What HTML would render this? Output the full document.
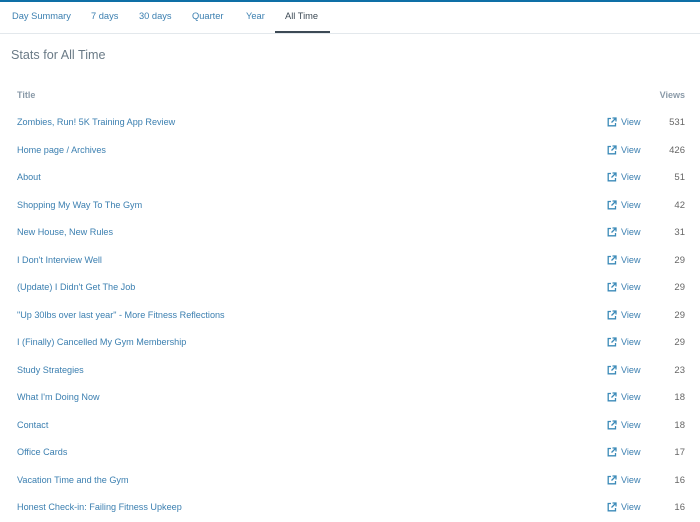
<!DOCTYPE html>
<html><head><style>
body{margin:0;width:700px;height:522px;background:#fff;font-family:"Liberation Sans",sans-serif;overflow:hidden;position:relative}
.top{position:absolute;left:0;top:0;width:700px;height:2px;background:#0e6fa6}
.tabs{position:absolute;top:0;left:0;width:700px;height:33px;border-bottom:1px solid #e3e8ec}
.tab{position:absolute;top:11px;font-size:9.3px;color:#3b7fb0}
.tab.act{color:#3d4a55}
.ul{position:absolute;left:275px;top:31px;width:55px;height:2px;background:#3d4a55}
h1{position:absolute;left:11px;top:48px;margin:0;font-size:12.6px;font-weight:normal;color:#6a7a86}
.hd{position:absolute;top:90px;font-size:9px;font-weight:bold;color:#8a9aa8}
.row{position:absolute;left:0;width:700px;height:14px;font-size:9.1px}
.row .t{position:absolute;left:17px;color:#3b7fb0}
.row .v{position:absolute;left:607px;color:#3b7fb0}
.row .v svg{vertical-align:-2px;margin-right:4px}
.row .n{position:absolute;right:15px;color:#666;font-size:9.5px}
</style></head><body>
<div class="tabs">
<span class="tab" style="left:12px">Day Summary</span>
<span class="tab" style="left:91px">7 days</span>
<span class="tab" style="left:139px">30 days</span>
<span class="tab" style="left:192px">Quarter</span>
<span class="tab" style="left:246px">Year</span>
<span class="tab act" style="left:285px">All Time</span>
<div class="ul"></div>
</div>
<div class="top"></div>
<h1>Stats for All Time</h1>
<span class="hd" style="left:17px">Title</span>
<span class="hd" style="right:15px">Views</span>
<div id="rows"></div>
<script>
var d=[["Zombies, Run! 5K Training App Review",531],["Home page / Archives",426],["About",51],["Shopping My Way To The Gym",42],["New House, New Rules",31],["I Don't Interview Well",29],["(Update) I Didn't Get The Job",29],["\"Up 30lbs over last year\" - More Fitness Reflections",29],["I (Finally) Cancelled My Gym Membership",29],["Study Strategies",23],["What I'm Doing Now",18],["Contact",18],["Office Cards",17],["Vacation Time and the Gym",16],["Honest Check-in: Failing Fitness Upkeep",16]];
var ic='<svg width="10" height="10" viewBox="0 0 10 10" fill="none" stroke="#3b8ab8" stroke-width="1.3"><path d="M4 1.5H1.2v7.3h7.3V6"/><path d="M5.5 1h3.5v3.5M9 1L4.5 5.5"/></svg>';
var h='';d.forEach(function(r,i){h+='<div class="row" style="top:'+(117+i*27.5)+'px"><span class="t">'+r[0]+'</span><span class="v">'+ic+'View</span><span class="n">'+r[1]+'</span></div>'});
document.getElementById('rows').innerHTML=h;
</script>
</body></html>
